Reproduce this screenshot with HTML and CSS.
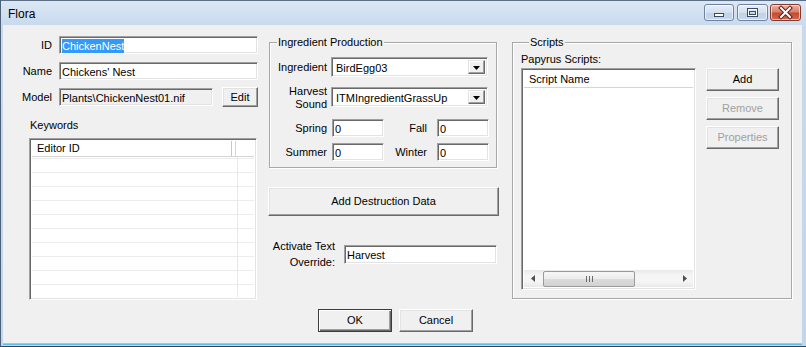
FILE: index.html
```html
<!DOCTYPE html>
<html>
<head>
<meta charset="utf-8">
<link rel="stylesheet" href="styles.css">
</head>
<body>
<div class="window">
  <div class="titlebar">
    <span class="title">Flora</span>
    <div class="caps">
      <div class="cap min"><svg width="28" height="15" viewBox="0 0 28 15"><rect x="9.5" y="8.5" width="9" height="3" fill="#fff" stroke="#3a4a60"/></svg></div>
      <div class="cap max"><svg width="29" height="15" viewBox="0 0 29 15"><rect x="9.5" y="3.5" width="10" height="8" fill="none" stroke="#3a4a60"/><rect x="10.5" y="4.5" width="8" height="6" fill="none" stroke="#fff"/><rect x="11.5" y="6.5" width="6" height="3" fill="none" stroke="#3a4a60"/></svg></div>
      <div class="cap close"><svg width="29" height="15" viewBox="0 0 29 15"><path d="M10 3 L19 12 M19 3 L10 12" stroke="#5a2018" stroke-width="4" stroke-linecap="square"/><path d="M10 3 L19 12 M19 3 L10 12" stroke="#fff" stroke-width="2" stroke-linecap="square"/></svg></div>
    </div>
  </div>
  <div class="client">
    <div class="main">
      <div class="col1">
        <div class="frow"><span class="lbl">ID</span><div class="edit wide"><span class="sel">ChickenNest</span></div></div>
        <div class="frow"><span class="lbl">Name</span><div class="edit wide">Chickens' Nest</div></div>
        <div class="frow"><span class="lbl">Model</span><div class="edit ro">Plants\ChickenNest01.nif</div><div class="btn editbtn">Edit</div></div>
        <div class="kwlabel">Keywords</div>
        <div class="listview kw">
          <div class="lvhead"><div class="hcell">Editor ID</div><div class="hrest"></div></div>
          <div class="kwbody"></div>
        </div>
      </div>

      <div class="col2">
        <fieldset class="group ing">
          <legend>Ingredient Production</legend>
          <div class="grow r1">
            <span class="glbl">Ingredient</span>
            <div class="combo"><span class="ctext">BirdEgg03</span><span class="drop"><svg width="7" height="4" viewBox="0 0 7 4"><path d="M0 0 H7 L3.5 4 Z" fill="#000"/></svg></span></div>
          </div>
          <div class="grow r2">
            <span class="glbl two">Harvest<br>Sound</span>
            <div class="combo"><span class="ctext">ITMIngredientGrassUp</span><span class="drop"><svg width="7" height="4" viewBox="0 0 7 4"><path d="M0 0 H7 L3.5 4 Z" fill="#000"/></svg></span></div>
          </div>
          <div class="grow r3">
            <span class="glbl">Spring</span><div class="edit small">0</div>
            <span class="glbl2">Fall</span><div class="edit small">0</div>
          </div>
          <div class="grow r4">
            <span class="glbl">Summer</span><div class="edit small">0</div>
            <span class="glbl2">Winter</span><div class="edit small">0</div>
          </div>
        </fieldset>
        <div class="btn destr">Add Destruction Data</div>
        <div class="activate">
          <span class="alabel">Activate Text<br>Override:</span>
          <div class="edit aedit">Harvest</div>
        </div>
      </div>

      <div class="col3">
        <fieldset class="group scripts">
          <legend>Scripts</legend>
          <div class="sgrid">
            <div class="pap">Papyrus Scripts:</div>
            <div class="listview sl">
              <div class="slhead">Script Name</div>
              <div class="slbody"></div>
              <div class="hscroll">
                <span class="arrow"><svg width="4" height="7" viewBox="0 0 4 7"><path d="M4 0 V7 L0 3.5 Z" fill="#505050"/></svg></span>
                <span class="thumb"><svg width="7" height="6" viewBox="0 0 7 6"><path d="M0.5 0 V6 M3.5 0 V6 M6.5 0 V6" stroke="#6a6a6a"/></svg></span>
                <span class="track"></span>
                <span class="arrow"><svg width="4" height="7" viewBox="0 0 4 7"><path d="M0 0 V7 L4 3.5 Z" fill="#505050"/></svg></span>
              </div>
            </div>
            <div class="sbtns">
              <div class="btn sbtn">Add</div>
              <div class="btn sbtn disabled">Remove</div>
              <div class="btn sbtn disabled">Properties</div>
            </div>
          </div>
        </fieldset>
      </div>
    </div>
    <div class="footer">
      <div class="btn fbtn default">OK</div>
      <div class="btn fbtn">Cancel</div>
    </div>
  </div>
</div>
</body>
</html>
```

FILE: styles.css
```css
* { box-sizing: border-box; }
body {
  margin: 0;
  width: 806px;
  height: 347px;
  overflow: hidden;
  font: 11px/13px "Liberation Sans", Arial, sans-serif;
  color: #000;
  background: #fff;
}
.window {
  width: 806px;
  height: 347px;
  display: flex;
  flex-direction: column;
  background: linear-gradient(to bottom, #dce7f4 0px, #c9daee 24px, #c3d5eb 100%);
  border-left: 1px solid #4f6177;
  border-top: 1px solid #5d6f85;
  border-bottom: 1px solid #25476a;
}
.titlebar {
  height: 24px;
  display: flex;
  align-items: flex-start;
  flex: none;
}
.title {
  margin: 6px 0 0 7px;
  font-size: 12px;
  line-height: 14px;
  color: #000;
}
.caps {
  margin-left: auto;
  margin-right: 5px;
  margin-top: 3px;
  display: flex;
}
.cap {
  height: 17px;
  border: 1px solid #6f83a0;
  border-radius: 3px;
  display: flex;
  align-items: center;
  justify-content: center;
  background: linear-gradient(to bottom, #e6eef8 0%, #d3e0f0 50%, #bfd1e8 51%, #c8d9ee 100%);
  box-shadow: inset 0 0 0 1px rgba(255,255,255,0.6);
}
.cap.min { width: 30px; }
.cap.max { width: 31px; margin-left: 3px; }
.cap.close {
  width: 31px;
  margin-left: 2px;
  border-color: #84392b;
  background: linear-gradient(to bottom, #eab1a2 0%, #d9806c 45%, #c64a33 55%, #d06a4f 100%);
}
.client {
  flex: 1;
  margin: 0 4px 3px 2px;
  background: #f0f0f0;
  padding: 11px 10px 0 15px;
  display: flex;
  flex-direction: column;
  box-shadow: 0 1px 0 #a6c4e4, 0 2px 0 #62bce4;
}
.main {
  display: flex;
  align-items: flex-start;
}
.col1 { width: 240px; flex: none; }
.col2 { width: 231px; margin-left: 10px; flex: none; }
.col3 { width: 280px; margin-left: 13px; flex: none; }

/* sunken edit */
.edit, .combo, .listview {
  border: 1px solid;
  border-color: #a0a0a0 #fff #fff #a0a0a0;
  box-shadow: inset 1px 1px 0 #696969, inset -1px -1px 0 #e3e3e3;
  background: #fff;
}
.edit {
  height: 18px;
  padding: 3px 2px 0 2px;
  white-space: nowrap;
  overflow: hidden;
}
.btn {
  border: 1px solid;
  border-color: #fff #696969 #696969 #fff;
  box-shadow: inset -1px -1px 0 #a0a0a0, inset 1px 1px 0 #e3e3e3;
  background: #f0f0f0;
  display: flex;
  align-items: center;
  justify-content: center;
  white-space: nowrap;
}
.btn.disabled { color: #a0a0a0; }

.frow {
  display: flex;
  align-items: center;
  height: 18px;
  margin-bottom: 8px;
}
.lbl {
  width: 34px;
  text-align: right;
  margin-right: 7px;
  flex: none;
}
.edit.wide { width: 199px; }
.edit.ro { width: 154px; background: #f0f0f0; }
.sel { background: #3399ff; color: #fff; padding: 1px 0; }
.editbtn { width: 36px; height: 20px; margin-left: 9px; }
.kwlabel { margin: 13px 0 0 12px; }
.listview.kw {
  margin: 6px 0 0 11px;
  width: 228px;
  height: 162px;
  padding: 2px;
  display: flex;
  flex-direction: column;
}
.lvhead {
  height: 16px;
  display: flex;
  border-bottom: 1px solid #d5d5d5;
  flex: none;
}
.hcell {
  width: 200px;
  padding-left: 5px;
  line-height: 15px;
  border-right: 1px solid #c8c8c8;
  box-shadow: 3px 0 0 #fff, 4px 0 0 #d5d5d5;
}
.hrest { flex: 1; }
.kwbody {
  flex: 1;
  background:
    linear-gradient(to right, transparent 205px, #e8e8e8 205px, #e8e8e8 206px, transparent 206px),
    repeating-linear-gradient(to bottom, transparent 0, transparent 13px, #ececec 13px, #ececec 14px);
  background-position: 0 0, 0 -12px;
}

/* group boxes */
.group {
  margin: 0;
  padding: 0;
  border: 1px solid #a8a8a8;
  box-shadow: inset 1px 1px 0 #fff, 1px 1px 0 #fff;
}
.group legend {
  padding: 0 1px;
  margin-left: 7px;
  line-height: 13px;
  background: #f0f0f0;
}
.ing {
  width: 228px;
  margin-left: 1px;
  padding-bottom: 6px;
}
.grow { display: flex; align-items: center; }
.r1 { margin-top: 8px; }
.r2 { margin-top: 6px; }
.r3 { margin-top: 8px; }
.r4 { margin-top: 6px; }
.glbl {
  width: 57px;
  text-align: right;
  margin-right: 4px;
  flex: none;
  padding-top: 1px;
}
.glbl.two { line-height: 13px; padding-top: 2px; }
.r3 .glbl, .r4 .glbl { margin-right: 5px; }
.glbl2 {
  width: 43px;
  text-align: right;
  margin-right: 10px;
  flex: none;
  padding-top: 1px;
}
.edit.small { width: 52px; }
.combo {
  width: 157px;
  height: 20px;
  display: flex;
  padding: 2px;
}
.ctext { flex: 1; padding: 2px 0 0 2px; white-space: nowrap; }
.drop {
  width: 17px;
  border: 1px solid;
  border-color: #e3e3e3 #696969 #696969 #e3e3e3;
  box-shadow: inset -1px -1px 0 #a0a0a0, inset 1px 1px 0 #fff;
  background: #f0f0f0;
  display: flex;
  align-items: center;
  justify-content: center;
  padding-top: 1px;
}
.destr { width: 231px; height: 29px; margin-top: 19px; }
.activate {
  display: flex;
  align-items: center;
  margin-top: 22px;
}
.alabel {
  width: 67px;
  text-align: right;
  line-height: 16px;
  margin-right: 9px;
  flex: none;
}
.edit.aedit { width: 153px; height: 19px; }

/* scripts */
.scripts {
  width: 280px;
  height: 263px;
  padding: 0 0 8px 8px;
}
.scripts legend { margin-left: 8px; }
.sgrid {
  display: grid;
  grid-template-columns: 175px 73px;
  column-gap: 10px;
  padding-top: 4px;
}
.pap { grid-column: 1 / 3; margin-bottom: 2px; }
.listview.sl {
  height: 222px;
  padding: 2px;
  display: flex;
  flex-direction: column;
}
.slhead {
  height: 17px;
  line-height: 17px;
  padding-left: 5px;
  border-bottom: 1px solid #d5d5d5;
  flex: none;
}
.slbody { flex: 1; }
.hscroll {
  height: 17px;
  flex: none;
  display: flex;
  align-items: center;
  background: linear-gradient(to bottom, #e8e8e8, #f5f5f5 30%, #f5f5f5 70%, #e8e8e8);
}
.arrow {
  width: 17px;
  height: 17px;
  display: flex;
  align-items: center;
  justify-content: center;
  flex: none;
}
.thumb {
  width: 92px;
  height: 16px;
  margin-left: 2px;
  border: 1px solid #9a9a9a;
  border-radius: 2px;
  background: linear-gradient(to bottom, #f6f6f6 0%, #ececec 50%, #dcdcdc 51%, #d2d2d2 100%);
  display: flex;
  align-items: center;
  justify-content: center;
  flex: none;
}
.track { flex: 1; }
.sbtns { display: flex; flex-direction: column; }
.sbtn { height: 23px; margin-bottom: 6px; }

.footer {
  display: flex;
  margin-top: 9px;
  padding-left: 300px;
}
.fbtn { width: 74px; height: 23px; }
.fbtn + .fbtn { margin-left: 7px; }
.fbtn.default {
  border: 1px solid #3c3c3c;
  box-shadow: inset 1px 1px 0 #fff, inset -1px -1px 0 #696969, inset -2px -2px 0 #a0a0a0;
}
```
